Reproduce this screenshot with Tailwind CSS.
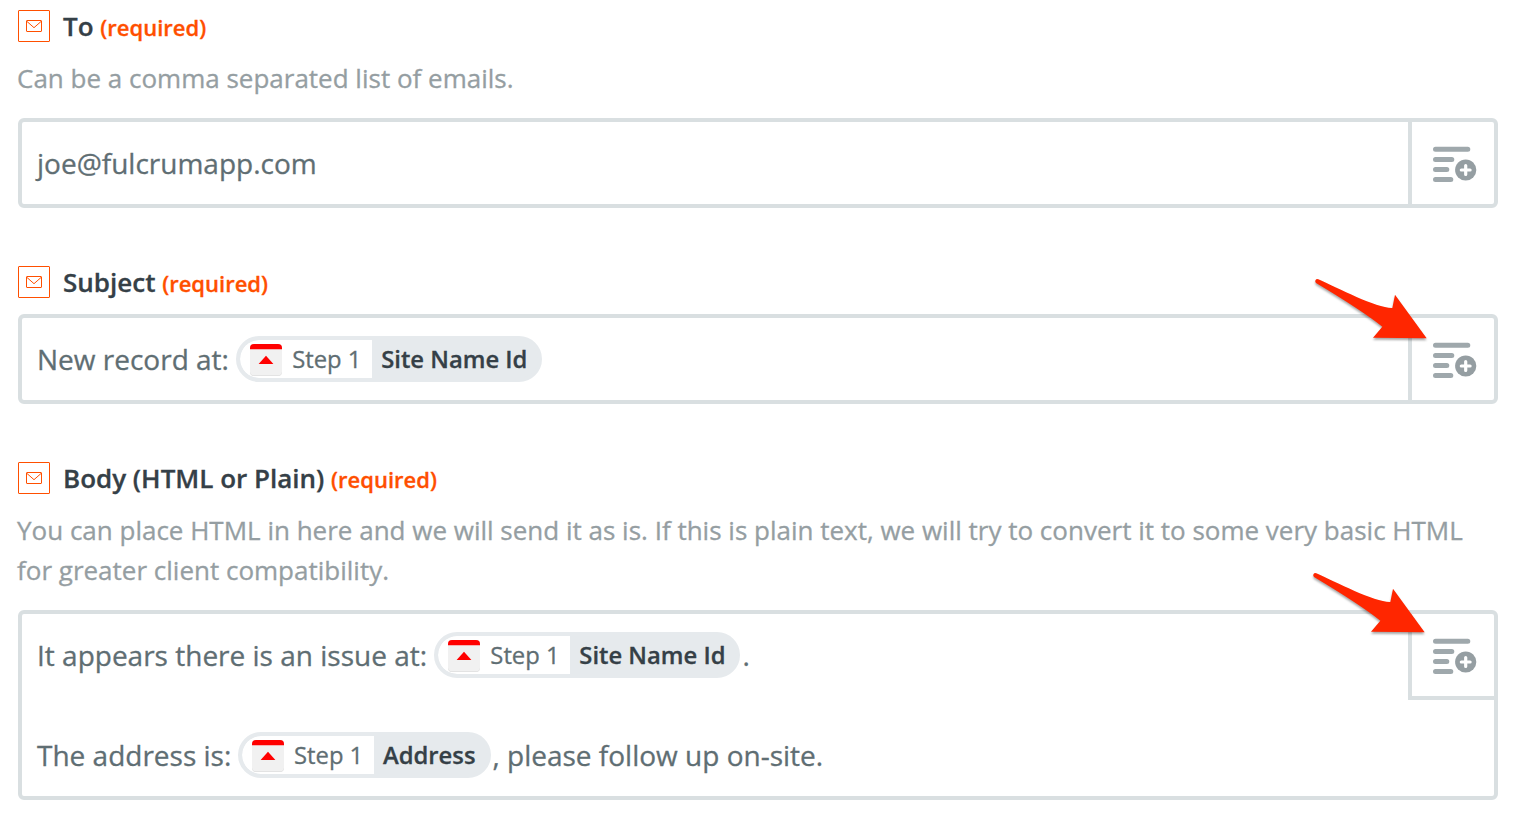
<!DOCTYPE html>
<html lang="en">
<head>
<meta charset="utf-8">
<title>Email action</title>
<script src="https://cdn.jsdelivr.net/npm/@tailwindcss/browser@4"></script>
</head>
<body class="bg-white font-['Open_Sans',sans-serif] text-[#5f6e73] h-[820px] overflow-hidden [-webkit-text-stroke-width:0.3px]">
<svg class="hidden">
  <symbol id="mail" viewBox="0 0 32 32"><rect x=".5" y=".5" width="31" height="31" rx=".5" fill="none" stroke="#ff4f00"/><rect x="8.5" y="10.5" width="15" height="11" rx=".5" fill="none" stroke="#ff4f00"/><path d="M9 11.5l7 6.2 7-6.2" fill="none" stroke="#ff4f00"/></symbol>
  <symbol id="insert" viewBox="0 0 44 36"><path d="M2.5 3.2h32.3M2.5 13.5h16.3M2.5 23.6h11.3M2.5 33.5h15.3" stroke="#9fa8ac" stroke-width="5" stroke-linecap="round"/><circle cx="32.7" cy="24" r="10.6" fill="#959ea2"/><path d="M32.7 19.6v8.8M28.3 24h8.8" stroke="#fff" stroke-width="3.2" stroke-linecap="round"/></symbol>
  <symbol id="logo" viewBox="0 0 32 32"><rect width="32" height="32" rx="4" fill="#dedede"/><rect width="32" height="31.3" rx="4" fill="#f1f1f1"/><path d="M0 5.3V4a4 4 0 0 1 4-4h24a4 4 0 0 1 4 4v1.3z" fill="#f00"/><path d="M8.6 20L16 11.7 23.4 20z" fill="#f00"/></symbol>
  <symbol id="arrow" viewBox="0 0 345 185"><path d="M6 0C2 0-2 8 3 12Q140 94 202 143L174 176 335 178 240 47 232 87C185 88 70 28 10 1Q8 0 6 0Z" fill="#ff2600"/></symbol>
</svg>
<main class="flex flex-col pt-2.5 pl-[18px] w-[1498px]">
  <section>
    <div class="flex h-8 items-center">
      <svg class="size-8"><use href="#mail"/></svg>
      <h2 class="ml-[13px] text-[26px] leading-8 font-semibold text-[#354047] whitespace-nowrap">To <span class="text-[22px] text-[#ff4f00]">(required)</span></h2>
    </div>
    <p class="mt-4 -ml-px text-[26px] leading-10 text-[#959ea2]">Can be a comma separated list of emails.</p>
    <div class="mt-5 flex h-[90px] rounded-md border-4 border-[#d9dfe1]">
      <div class="flex flex-1 items-center pl-[15px] text-[28px]">joe@fulcrumapp.com</div>
      <div class="w-[86px] border-l-4 border-[#d9dfe1] pt-6 pl-[21px]"><svg class="h-9 w-11"><use href="#insert"/></svg></div>
    </div>
  </section>

  <section class="mt-[58px]">
    <div class="flex h-8 items-center">
      <svg class="size-8"><use href="#mail"/></svg>
      <h2 class="ml-[13px] text-[26px] leading-8 font-semibold text-[#354047] whitespace-nowrap">Subject <span class="text-[22px] text-[#ff4f00]">(required)</span></h2>
    </div>
    <div class="relative mt-4 flex h-[90px] rounded-md border-4 border-[#d9dfe1]">
      <div class="flex flex-1 items-center pl-[15px] text-[28px] whitespace-pre">New record at: <span class="flex h-[46px] items-stretch overflow-hidden rounded-full border-4 border-[#e6eaed] bg-[#e6eaed] text-[23.8px] leading-[38px]"><span class="flex w-[132px] items-center rounded-l-full bg-white pl-2.5"><svg class="mt-0.5 mr-2.5 size-8"><use href="#logo"/></svg>Step 1</span><b class="pr-[11px] pl-[9px] font-semibold text-[#354047]">Site Name Id</b></span></div>
      <div class="w-[86px] border-l-4 border-[#d9dfe1] pt-6 pl-[21px]"><svg class="h-9 w-11"><use href="#insert"/></svg></div>
      <svg class="absolute -top-[39px] left-[1293px] h-[61.67px] w-[115px] overflow-visible drop-shadow-[0_2px_1px_rgba(0,0,0,0.35)]"><use href="#arrow"/></svg>
    </div>
  </section>

  <section class="mt-[58px]">
    <div class="flex h-8 items-center">
      <svg class="size-8"><use href="#mail"/></svg>
      <h2 class="ml-[13px] text-[26px] leading-8 font-semibold text-[#354047] whitespace-nowrap">Body (HTML or Plain) <span class="text-[22px] text-[#ff4f00]">(required)</span></h2>
    </div>
    <p class="mt-4 -ml-px text-[26px] leading-10 text-[#959ea2]">You can place HTML in here and we will send it as is. If this is plain text, we will try to convert it to some very basic HTML<br>for greater client compatibility.</p>
    <div class="relative mt-5 flex h-[190px] rounded-md border-4 border-[#d9dfe1]">
      <div class="flex flex-1 flex-col gap-[54px] pt-[18px] pl-[15px] text-[28px] whitespace-pre">
        <div class="flex h-[46px] items-center">It appears there is an issue at: <span class="flex h-[46px] items-stretch overflow-hidden rounded-full border-4 border-[#e6eaed] bg-[#e6eaed] text-[23.8px] leading-[38px]"><span class="flex w-[132px] items-center rounded-l-full bg-white pl-2.5"><svg class="mt-0.5 mr-2.5 size-8"><use href="#logo"/></svg>Step 1</span><b class="pr-[11px] pl-[9px] font-semibold text-[#354047]">Site Name Id</b></span><span class="ml-0.5">.</span></div>
        <div class="flex h-[46px] items-center">The address is: <span class="-ml-[0.6px] flex h-[46px] items-stretch overflow-hidden rounded-full border-4 border-[#e6eaed] bg-[#e6eaed] text-[23.8px] leading-[38px]"><span class="flex w-[132px] items-center rounded-l-full bg-white pl-2.5"><svg class="mt-0.5 mr-2.5 size-8"><use href="#logo"/></svg>Step 1</span><b class="pr-[11px] pl-[9px] font-semibold text-[#354047]">Address</b></span><span class="ml-0.5">, please follow up on-site.</span></div>
      </div>
      <div class="h-[86px] w-[86px] border-b-4 border-l-4 border-[#d9dfe1] pt-6 pl-[21px]"><svg class="h-9 w-11"><use href="#insert"/></svg></div>
      <svg class="absolute -top-[41.3px] left-[1291px] h-[61.67px] w-[115px] overflow-visible drop-shadow-[0_2px_1px_rgba(0,0,0,0.35)]"><use href="#arrow"/></svg>
    </div>
  </section>
</main>
</body>
</html>
